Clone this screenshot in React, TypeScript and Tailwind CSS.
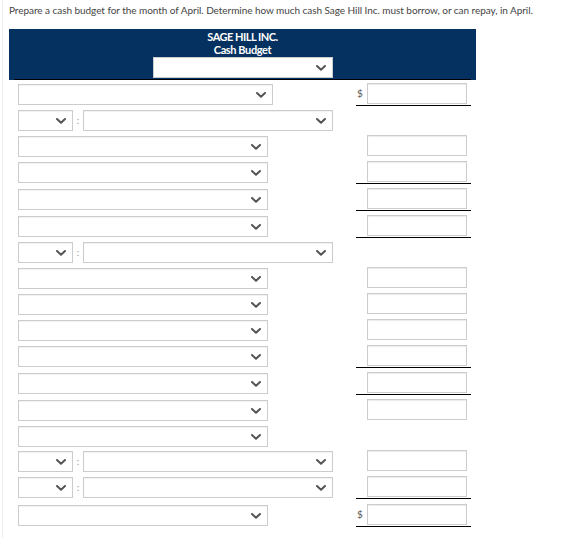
import React from "react";

type LeftKind = "wide" | "n" | "pair";
type RightKind = "$" | "in" | null;
interface Row {
  left: LeftKind;
  right: RightKind;
  u?: boolean;
  h: number;
}

const rows: Row[] = [
  { left: "wide", right: "$", u: true, h: 26 },
  { left: "pair", right: null, h: 26 },
  { left: "n", right: "in", h: 26 },
  { left: "n", right: "in", u: true, h: 27 },
  { left: "n", right: "in", u: true, h: 27 },
  { left: "n", right: "in", u: true, h: 26 },
  { left: "pair", right: null, h: 26 },
  { left: "n", right: "in", h: 26 },
  { left: "n", right: "in", h: 26 },
  { left: "n", right: "in", h: 26 },
  { left: "n", right: "in", u: true, h: 27 },
  { left: "n", right: "in", u: true, h: 27 },
  { left: "n", right: "in", h: 26 },
  { left: "n", right: null, h: 25 },
  { left: "pair", right: "in", h: 26 },
  { left: "pair", right: "in", u: true, h: 28 },
  { left: "n", right: "$", u: true, h: 26 },
];

function Chevron() {
  return (
    <svg width="10" height="6" viewBox="0 0 10 6" className="shrink-0">
      <polyline
        points="1,1 5,4.8 9,1"
        fill="none"
        stroke="#555"
        strokeWidth="2"
        strokeLinecap="round"
        strokeLinejoin="round"
      />
    </svg>
  );
}

function Select({ w }: { w: string }) {
  return (
    <div
      className={`${w} h-[21px] border border-[#cccccc] bg-white flex items-center justify-end pr-[6px] shadow-[inset_0_1px_1px_rgba(0,0,0,0.06)]`}
    >
      <Chevron />
    </div>
  );
}

function Left({ kind }: { kind: LeftKind }) {
  if (kind === "wide") return <Select w="w-[255px]" />;
  if (kind === "n") return <Select w="w-[250px]" />;
  return (
    <div className="flex items-center">
      <Select w="w-[55px]" />
      <span className="w-[10px] text-center text-[10px] leading-[21px] text-[#999]">:</span>
      <Select w="w-[250px]" />
    </div>
  );
}

function Right({ kind, u }: { kind: RightKind; u?: boolean }) {
  if (!kind) return <div className="w-[115px]" />;
  return (
    <div
      className={`w-[115px] flex items-start pb-[1px] ${u ? "border-b border-black" : ""}`}
    >
      <span className="w-[11px] pl-[1px] text-[10px] leading-[21px] text-[#555]">
        {kind === "$" ? "$" : ""}
      </span>
      <div className="w-[100px] h-[21px] border border-[#cccccc] bg-white shadow-[inset_0_1px_1px_rgba(0,0,0,0.08)]" />
    </div>
  );
}

export default function App() {
  return (
    <div
      className="w-[576px] min-h-[538px] bg-white pl-[2px]"
      style={{ fontFamily: "Lato, 'Open Sans', sans-serif" }}
    >
      <div className="min-h-[538px] border-l border-[#eeeeee]">
        <p className="pl-[6px] pt-[4px] text-[10px] leading-[13px] text-[#444444] tracking-[-0.05px]">
          Prepare a cash budget for the month of April. Determine how much cash Sage Hill Inc. must borrow, or can repay, in April.
        </p>
        <div className="ml-[6px] mt-[12px] w-[467px] bg-[#04315f] pt-[1px] flex flex-col items-center">
          <div className="text-white font-bold text-[11px] leading-[13px] tracking-[-0.5px]">SAGE HILL INC.</div>
          <div className="text-white font-bold text-[11px] leading-[13px] tracking-[-0.4px]">Cash Budget</div>
          <div className="mt-[1px] w-[180px] h-[21px] bg-white border border-[#cccccc] flex items-center justify-end pr-[6px]">
            <Chevron />
          </div>
          <div className="mt-[1px] self-stretch mx-[5px] h-[1px] bg-black" />
        </div>
        <div className="mt-[3px] flex flex-col">
          {rows.map((r, i) => (
            <div key={i} className="flex items-start" style={{ height: r.h }}>
              <div className="w-[353px] pl-[15px] pt-[1px]">
                <Left kind={r.left} />
              </div>
              <Right kind={r.right} u={r.u} />
            </div>
          ))}
        </div>
      </div>
    </div>
  );
}
